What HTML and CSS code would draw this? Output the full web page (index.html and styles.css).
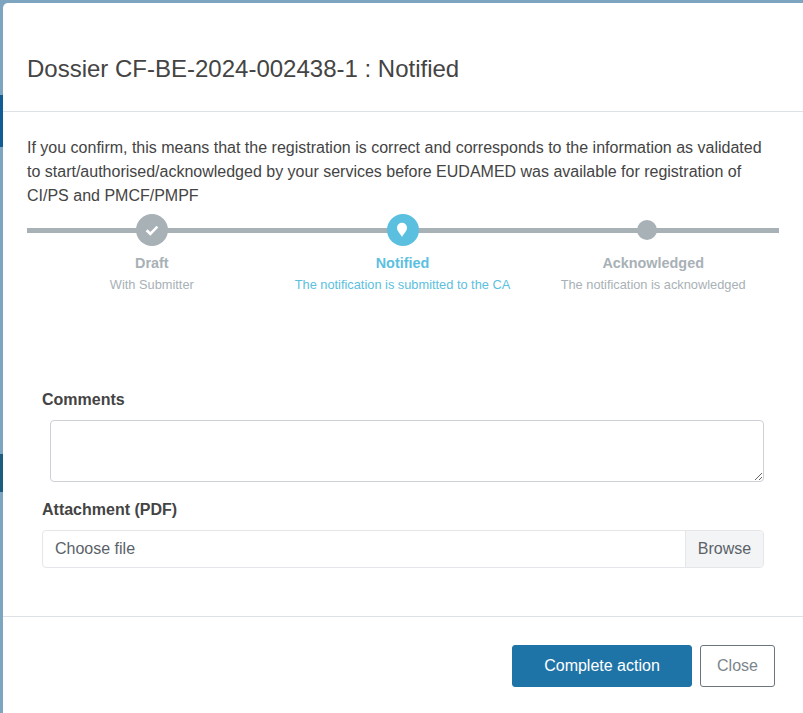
FILE: index.html
```html
<!DOCTYPE html>
<html lang="en">
<head>
    <meta charset="UTF-8">
    <title>Dossier CF-BE-2024-002438-1</title>
    <link rel="stylesheet" href="styles.css">
</head>
<body>
    <div class="backdrop">
        <div class="backdrop-bar bar-top"></div>
        <div class="backdrop-bar bar-bottom"></div>
    </div>
    <div class="modal">
        <div class="modal-header">
            <h4 class="modal-title">Dossier CF-BE-2024-002438-1 : Notified</h4>
        </div>
        <div class="modal-body">
            <p class="intro">If you confirm, this means that the registration is correct and corresponds to the information as validated to start/authorised/acknowledged by your services before EUDAMED was available for registration of CI/PS and PMCF/PMPF</p>

            <div class="stepper">
                <div class="step">
                    <div class="step-track">
                        <span class="step-dot">
                            <svg width="16" height="14" viewBox="0 0 16 14"><path d="M2.6 7.2l3.7 3.6L13.4 3.6" fill="none" stroke="#fff" stroke-width="2.6"/></svg>
                        </span>
                    </div>
                    <div class="step-name">Draft</div>
                    <div class="step-desc">With Submitter</div>
                </div>
                <div class="step active">
                    <div class="step-track">
                        <span class="step-dot">
                            <svg class="pin" width="12" height="16" viewBox="0 0 12 16"><path d="M6 15C4.4 12 1 9.2 1 5.8a5 5 0 0 1 10 0C11 9.2 7.6 12 6 15z" fill="#fff"/></svg>
                        </span>
                    </div>
                    <div class="step-name">Notified</div>
                    <div class="step-desc">The notification is submitted to the CA</div>
                </div>
                <div class="step last">
                    <div class="step-track">
                        <span class="step-dot small"></span>
                    </div>
                    <div class="step-name">Acknowledged</div>
                    <div class="step-desc">The notification is acknowledged</div>
                </div>
            </div>

            <form class="action-form">
                <label class="field-label" for="comments">Comments</label>
                <textarea id="comments" class="comments"></textarea>
                <label class="field-label attachment-label">Attachment (PDF)</label>
                <div class="file-input">
                    <span class="file-name">Choose file</span>
                    <span class="file-browse">Browse</span>
                </div>
            </form>
        </div>
        <div class="modal-footer">
            <button class="btn btn-primary">Complete action</button>
            <button class="btn btn-outline">Close</button>
        </div>
    </div>
</body>
</html>
```

FILE: styles.css
```css
* { margin: 0; padding: 0; box-sizing: border-box; }
html, body { height: 713px; overflow: hidden; }
body {
    display: flex;
    font-family: "Liberation Sans", Arial, sans-serif;
    font-size: 16px; color: #444; background: #7da5bf;
}
.backdrop { width: 3px; flex: none; position: relative; }
.backdrop-bar { position: absolute; left: 0; width: 3px; background: #125c94; }
.bar-top { top: 95px; height: 52px; }
.bar-bottom { top: 454px; height: 38px; background: #1a5d80; }

.modal {
    flex: 1; margin-top: 3px; height: 720px; background: #fff;
    border-radius: 5px 0 0 0; display: flex; flex-direction: column;
}
.modal-header { height: 109px; padding: 51px 24px 0; border-bottom: 1px solid #dee2e6; }
.modal-title { font-size: 24px; font-weight: 400; line-height: 30px; color: #444; }

.modal-body { padding: 24px 24px 0; height: 504px; }
.intro { line-height: 24px; color: #444; width: 745px; }

.stepper {
    display: grid; grid-template-columns: repeat(3, 1fr); width: 752px; margin-top: 6px;
    background: linear-gradient(#a8b1b6, #a8b1b6) 0 14px / 100% 5px no-repeat;
}
.step { text-align: center; color: #a8b1b6; }
.step-track { height: 32px; display: flex; justify-content: center; align-items: center; }
.step-dot {
    width: 32px; height: 32px; border-radius: 50%; background: #a8b1b6;
    display: flex; align-items: center; justify-content: center;
}
.step-dot.small { width: 20px; height: 20px; margin-right: 13px; }
.pin { margin: -1px 1px 0 0; }
.step.active { color: #5bc0e0; }
.step.active .step-dot { background: #5bc0e0; }
.step-name { font-size: 14.4px; font-weight: 700; line-height: 16px; margin: 9px 1px 0 0; }
.step-desc { font-size: 12.8px; line-height: 16px; margin: 6px 1px 0 0; }

.action-form { padding: 0 15px; margin-top: 95px; width: 752px; }
.field-label { display: block; font-weight: 700; line-height: 24px; color: #444; }
.comments {
    display: block; width: 714px; height: 62px; margin: 8px 0 0 8px; padding: 6px 12px;
    border: 1px solid #ced0d8; border-radius: 4px; font-family: inherit; font-size: 16px;
}
.attachment-label { margin-top: 16px; }
.file-input {
    display: flex; height: 38px; width: 722px; margin-top: 8px;
    border: 1px solid #e4e6ea; border-radius: 4px; overflow: hidden; line-height: 36px;
}
.file-name { flex: 1; padding-left: 12px; color: #5a6268; }
.file-browse { width: 78px; text-align: center; color: #5a6268; background: #f3f4f6; border-left: 1px solid #e4e6ea; }

.modal-footer {
    height: 106px; padding: 28px 28px 0 0; border-top: 1px solid #dee2e6;
    display: flex; justify-content: flex-end; align-items: flex-start; gap: 8px;
}
.btn { height: 42px; font-family: inherit; font-size: 16px; border-radius: 3px; cursor: pointer; }
.btn-primary { width: 180px; background: #1f74a7; color: #fff; border: 1px solid #1f74a7; }
.btn-outline { width: 75px; background: #fff; color: #7c858c; border: 1px solid #6c757d; }
```
